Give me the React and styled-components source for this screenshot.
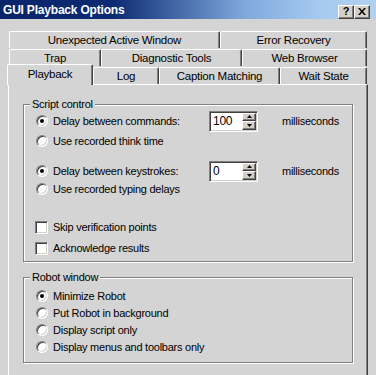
import React from 'react';
import styled, { createGlobalStyle } from 'styled-components';

const GlobalStyle = createGlobalStyle`
  html, body {
    margin: 0;
    padding: 0;
    background: #d4d4d4;
  }

  body {
    font-family: "Liberation Sans", Arial, sans-serif;
    font-size: 11px;
    letter-spacing: -0.25px;
    color: #000;
  }
`;

const App = () => {
  return (
    <>
      <GlobalStyle />
      <Window>
        <TitleBar>
          <Title>GUI Playback Options</Title>
          <TitleButtons>
            <TitleButton>?</TitleButton>
            <TitleButton>
              <svg width="8" height="7" viewBox="0 0 8 7">
                <path d="M0 0h2l2 2.5L6 0h2L5 3.5 8 7H6L4 4.5 2 7H0l3-3.5z" fill="#000" />
              </svg>
            </TitleButton>
          </TitleButtons>
        </TitleBar>

        <TabStrip>
          {TAB_ROWS.map(({ id, height, left, top, tabs }) => (
            <TabRow key={id} $h={height} $left={left} $top={top}>
              {tabs.map(({ title, width, active }) => (
                <Tab key={title} $w={width} $active={active}>
                  {title}
                </Tab>
              ))}
            </TabRow>
          ))}
        </TabStrip>

        <Panel>
          <GroupBox $pb={4}>
            <GroupLabel>Script control</GroupLabel>
            <OptionRow $mt={1}>
              <Choice $w={174}>
                <Slot>
                  <Radio $checked />
                </Slot>
                Delay between commands:
              </Choice>
              <SpinField value="100" />
              <Unit>milliseconds</Unit>
            </OptionRow>
            <OptionRow $mt={2}>
              <Choice>
                <Slot>
                  <Radio />
                </Slot>
                Use recorded think time
              </Choice>
            </OptionRow>
            <OptionRow $mt={12}>
              <Choice $w={174}>
                <Slot>
                  <Radio $checked />
                </Slot>
                Delay between keystrokes:
              </Choice>
              <SpinField value="0" />
              <Unit>milliseconds</Unit>
            </OptionRow>
            <OptionRow>
              <Choice>
                <Slot>
                  <Radio />
                </Slot>
                Use recorded typing delays
              </Choice>
            </OptionRow>
            <OptionRow $mt={20}>
              <Choice>
                <Slot>
                  <CheckBox />
                </Slot>
                Skip verification points
              </Choice>
            </OptionRow>
            <OptionRow $mt={3}>
              <Choice>
                <Slot>
                  <CheckBox />
                </Slot>
                Acknowledge results
              </Choice>
            </OptionRow>
          </GroupBox>

          <GroupBox $mt={15} $pb={7}>
            <GroupLabel>Robot window</GroupLabel>
            {ROBOT_OPTIONS.map(({ id, title, checked }, i) => (
              <OptionRow key={id} $h={17} $mt={i === 0 ? 3 : 0}>
                <Choice>
                  <Slot>
                    <Radio $checked={checked} />
                  </Slot>
                  {title}
                </Choice>
              </OptionRow>
            ))}
          </GroupBox>
        </Panel>
      </Window>
    </>
  );
};

const SpinField = ({ value }) => (
  <SpinBox>
    <SpinText>{value}</SpinText>
    <Spinner>
      <SpinButton>
        <svg width="5" height="3" viewBox="0 0 5 3">
          <path d="M2.5 0L5 3H0z" fill="#000" />
        </svg>
      </SpinButton>
      <SpinButton>
        <svg width="5" height="3" viewBox="0 0 5 3">
          <path d="M0 0h5L2.5 3z" fill="#000" />
        </svg>
      </SpinButton>
    </Spinner>
  </SpinBox>
);

export default App;

const Window = styled.div`
  width: 376px;
  height: 375px;
  overflow: hidden;
  background: #d4d4d4;
`;

const TitleBar = styled.div`
  height: 19px;
  padding: 0 6px 0 3px;
  display: flex;
  align-items: center;
  justify-content: space-between;
  background: linear-gradient(90deg, #0a246a 0%, #0c2a72 30%, #7fa9dc 65%, #a6caf0 85%, #b4d0ee 100%);
`;

const Title = styled.span`
  color: #fff;
  font-weight: bold;
  font-size: 12px;
  letter-spacing: -0.2px;
`;

const TitleButtons = styled.div`
  margin-top: 4px;
  display: flex;
`;

const TitleButton = styled.div`
  width: 16px;
  height: 14px;
  box-sizing: border-box;
  display: flex;
  align-items: center;
  justify-content: center;
  background: #d4d0c8;
  border: 1px solid;
  border-color: #fff #404040 #404040 #fff;
  box-shadow: inset -1px -1px #808080;
  font-weight: bold;
  font-size: 11px;
  line-height: 1;
`;

const TabStrip = styled.div`
  margin-top: 12px;
  display: flex;
  flex-direction: column;
`;

const TabRow = styled.div`
  height: ${({ $h }) => $h}px;
  margin-left: ${({ $left }) => $left}px;
  margin-top: ${({ $top }) => $top || 0}px;
  display: flex;
  align-items: flex-end;
`;

const Tab = styled.div`
  position: relative;
  z-index: ${({ $active }) => ($active ? 2 : 0)};
  width: ${({ $w }) => $w}px;
  height: ${({ $active }) => ($active ? 21 : 17)}px;
  margin-bottom: ${({ $active }) => ($active ? -1 : 0)}px;
  padding-bottom: ${({ $active }) => ($active ? 3 : 0)}px;
  box-sizing: border-box;
  display: flex;
  align-items: center;
  justify-content: center;
  background: #d4d4d4;
  border-top: 1px solid #fff;
  border-left: 1px solid #fff;
  border-right: 1px solid #404040;
  border-top-left-radius: 2px;
  border-top-right-radius: 2px;
  box-shadow: inset -1px 0 #808080;
  font-size: 11.5px;
  white-space: nowrap;
`;

const Panel = styled.div`
  width: 360px;
  height: 300px;
  margin-left: 8px;
  padding: 19px 0 0 14px;
  box-sizing: border-box;
  border-top: 1px solid #fff;
  border-left: 1px solid #fff;
  border-right: 1px solid #404040;
  box-shadow: inset -1px 0 #808080;
`;

const GroupBox = styled.div`
  width: 330px;
  margin-top: ${({ $mt }) => $mt || 0}px;
  padding-bottom: ${({ $pb }) => $pb}px;
  box-sizing: border-box;
  border: 1px solid #808080;
  box-shadow: inset 1px 1px #fff, 1px 1px #fff;
`;

const GroupLabel = styled.div`
  display: table;
  height: 14px;
  margin: -8px 0 0 6px;
  padding: 0 2px;
  line-height: 14px;
  background: #d4d4d4;
`;

const OptionRow = styled.div`
  height: ${({ $h }) => $h || 18}px;
  margin-top: ${({ $mt }) => $mt || 0}px;
  padding-left: 11px;
  display: flex;
  align-items: center;
`;

const Choice = styled.div`
  width: ${({ $w }) => ($w ? `${$w}px` : 'auto')};
  display: flex;
  align-items: center;
  gap: 5px;
  white-space: nowrap;
`;

const Slot = styled.span`
  width: 13px;
  height: 13px;
  display: flex;
  align-items: center;
  justify-content: flex-end;
`;

const Radio = styled.span`
  width: 12px;
  height: 12px;
  box-sizing: border-box;
  display: flex;
  align-items: center;
  justify-content: center;
  border-radius: 50%;
  background: #fff;
  border: 1px solid;
  border-color: #808080 #fff #fff #808080;
  box-shadow: inset 1px 1px #404040, inset -1px -1px #d4d0c8;

  &::after {
    content: '';
    width: 4px;
    height: 4px;
    border-radius: 50%;
    background: #000;
    display: ${({ $checked }) => ($checked ? 'block' : 'none')};
  }
`;

const CheckBox = styled.span`
  width: 13px;
  height: 13px;
  box-sizing: border-box;
  background: #fff;
  border: 1px solid;
  border-color: #808080 #fff #fff #808080;
  box-shadow: inset 1px 1px #404040, inset -1px -1px #d4d0c8;
`;

const SpinBox = styled.div`
  width: 49px;
  height: 21px;
  padding: 1px;
  box-sizing: border-box;
  display: flex;
  background: #fff;
  border: 1px solid;
  border-color: #808080 #fff #fff #808080;
  box-shadow: inset 1px 1px #404040, inset -1px -1px #d4d0c8;
`;

const SpinText = styled.div`
  flex: 1;
  padding-left: 2px;
  line-height: 17px;
  font-size: 12px;
`;

const Spinner = styled.div`
  width: 14px;
  display: flex;
  flex-direction: column;
`;

const SpinButton = styled.div`
  flex: 1;
  box-sizing: border-box;
  display: flex;
  align-items: center;
  justify-content: center;
  background: #d4d0c8;
  border: 1px solid;
  border-color: #fff #404040 #404040 #fff;
  box-shadow: inset -1px -1px #808080;
`;

const Unit = styled.span`
  margin-left: 24px;
`;

const TAB_ROWS = [
  {
    id: 1,
    height: 17,
    left: 9,
    tabs: [
      { title: 'Unexpected Active Window', width: 211 },
      { title: 'Error Recovery', width: 147 },
    ],
  },
  {
    id: 2,
    height: 18,
    left: 9,
    tabs: [
      { title: 'Trap', width: 92 },
      { title: 'Diagnostic Tools', width: 141 },
      { title: 'Web Browser', width: 125 },
    ],
  },
  {
    id: 3,
    height: 20,
    left: 7,
    top: -2,
    tabs: [
      { title: 'Playback', width: 86, active: true },
      { title: 'Log', width: 66 },
      { title: 'Caption Matching', width: 121 },
      { title: 'Wait State', width: 87 },
    ],
  },
];

const ROBOT_OPTIONS = [
  { id: 1, title: 'Minimize Robot', checked: true },
  { id: 2, title: 'Put Robot in background' },
  { id: 3, title: 'Display script only' },
  { id: 4, title: 'Display menus and toolbars only' },
];
